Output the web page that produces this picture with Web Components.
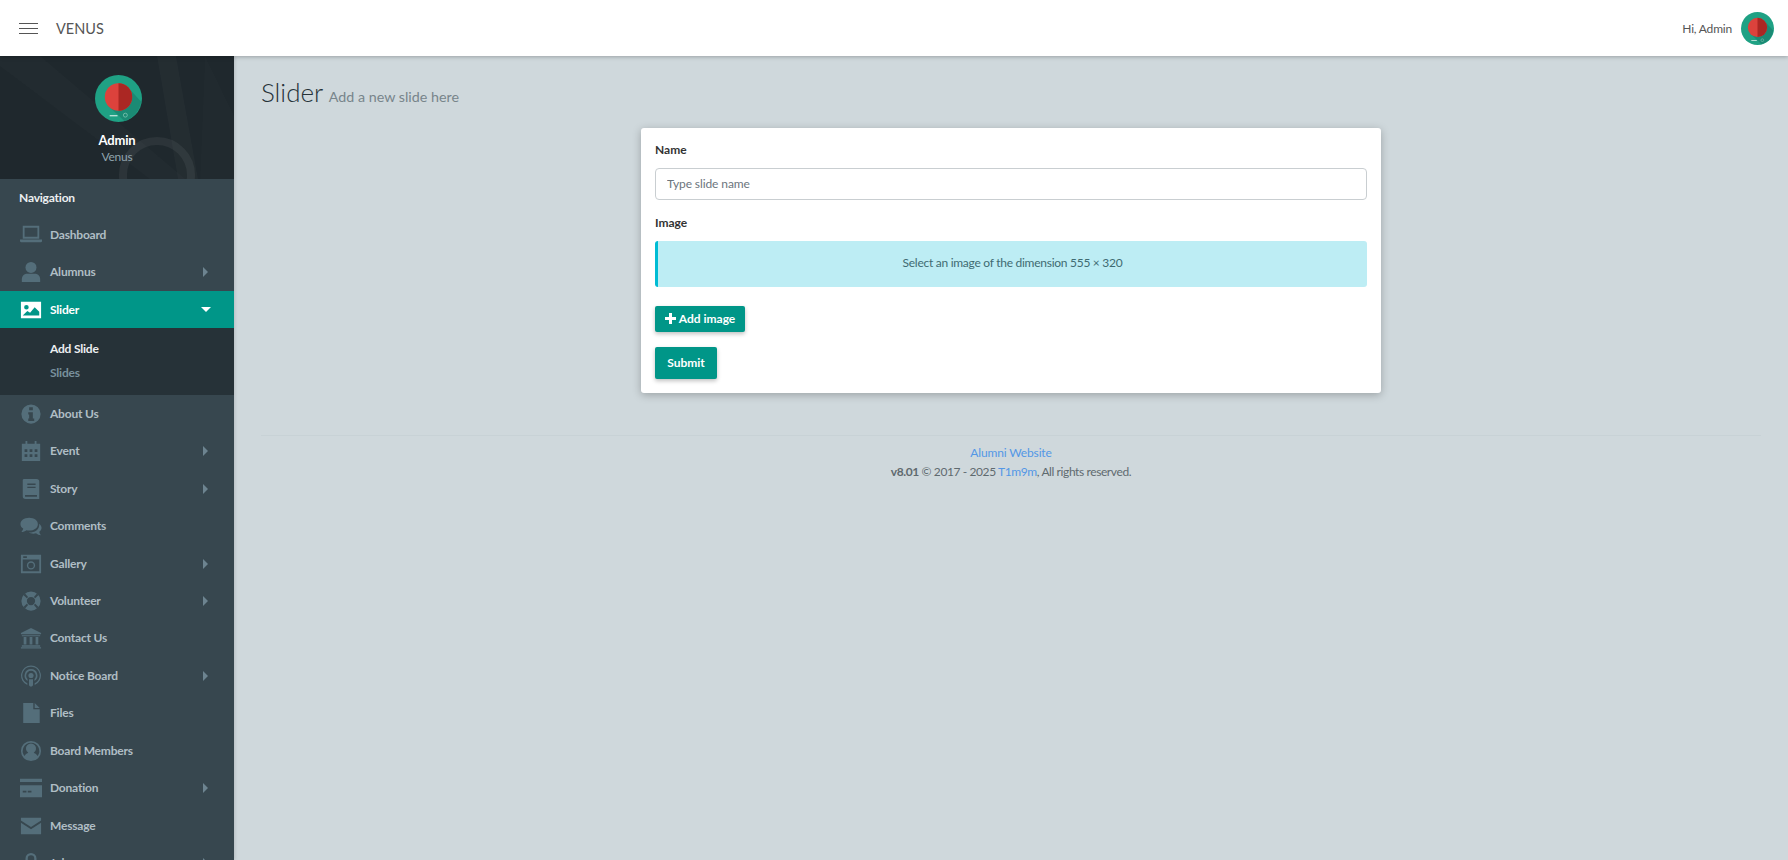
<!DOCTYPE html>
<html lang="en">
<head>
<meta charset="utf-8">
<title>Venus</title>
<style>
    html, body { margin: 0; height: 100%; overflow: hidden; }
    body { font-family: Lato, "Noto Sans", sans-serif; background: #cfd8dc; color: #3b4144; }
</style>
</head>
<body>
<venus-app></venus-app>

<script>
const avatarSvg = size => {
    return `<svg width="${size}" height="${size}" viewBox="0 0 48 48" style="display:block">
        <circle cx="24" cy="24" r="24" fill="#1fa184"/>
        <path d="M33 12 L47 27 A24 24 0 0 1 30 47 L14 32 Z" fill="#1b8a74"/>
        <circle cx="24" cy="22.500" r="14" fill="#dc423c"/>
        <path d="M24 8.500a14 14 0 0 1 0 28z" fill="#ab2723"/>
        <rect x="15" y="41" width="8" height="1.200" fill="#cfeae3"/>
        <circle cx="31" cy="41" r="2" fill="none" stroke="#7fc6b4" stroke-width=".8"/>
    </svg>`;
};

// sidebar icons, all on a 24 wide box
const ICONS = {
    laptop: '<path d="M3 2h18v14H3zM5 4v10h14V4z" fill-rule="evenodd"/><path d="M0 17h24v1.500a1.500 1.500 0 0 1-1.500 1.500h-21A1.500 1.500 0 0 1 0 18.500z"/>',
    user: '<circle cx="12" cy="7" r="6"/><path d="M2 23v-3c0-4 3-6 6-6h8c3 0 6 2 6 6v3z"/>',
    image: '<path fill-rule="evenodd" d="M1 3h22v18H1zM3 18h18v-4l-5-5-5 6-3-2zM7 6.500a2.500 2.500 0 1 0 0 5 2.500 2.500 0 0 0 0-5z"/>',
    info: '<path fill-rule="evenodd" d="M12 1.500a10.500 10.500 0 1 0 0 21 10.500 10.500 0 0 0 0-21zM10 4.500h4v3.500h-4zM9 10h5v7h1.500v2.500h-6.500V17H10v-4.500H9z"/>',
    calendar: '<path fill-rule="evenodd" d="M6 1h2v3h8V1h2v3h4v19H2V4h4zM5 10v3h3v-3zm5.500 0v3h3v-3zm5.500 0v3h3v-3zM5 15.500v3h3v-3zm5.500 0v3h3v-3zm5.500 0v3h3v-3z"/>',
    book: '<path fill-rule="evenodd" d="M4 1h14a3 3 0 0 1 3 3v19H6a3 3 0 0 1-3-3V2zM8 6v1.500h9V6zm0 3.500V11h9V9.500zM5.500 18.500v2h13v-2z"/>',
    comments: '<path d="M10 3c5.500 0 9.500 3 9.500 7s-4 7-9.500 7c-1 0-2-.1-3-.4C5.500 18 3.500 18.500 1.500 18.500c1-1 1.800-2.200 2-3.700C1.500 13.500.5 11.900.5 10c0-4 4-7 9.500-7z"/><path d="M21 9.500c1.500 1.200 2.500 2.800 2.500 4.500 0 1.800-1 3.300-2.500 4.300.2 1.500 1 2.800 2 3.700-2 0-4-.5-5.500-2-1 .3-2 .4-3 .4-2 0-3.500-.4-5-1.200 6 .3 12-3 11.500-9.700z"/>',
    camera: '<path fill-rule="evenodd" d="M1 2h22v20H1zM3 7v13h18V7zM3.500 3.500v2h4v-2zM12 9a4.500 4.500 0 1 0 0 9 4.500 4.500 0 0 0 0-9zm0 1.500a3 3 0 1 1 0 6 3 3 0 0 1 0-6z"/>',
    lifering: '<path fill-rule="evenodd" d="M12 1.500a10.500 10.500 0 1 0 0 21 10.500 10.500 0 0 0 0-21zM12 7.500a4.500 4.500 0 1 1 0 9 4.500 4.500 0 0 1 0-9z"/><path d="M5.500 3.800 8.800 7.600 7.400 9 3.800 5.500zM18.500 3.800 15.200 7.600 16.600 9 20.200 5.500zM5.500 20.200 8.800 16.400 7.400 15 3.800 18.500zM18.500 20.200 15.200 16.400 16.600 15 20.200 18.500z" fill="#37474f"/>',
    bank: '<path d="M12 1l11 5.500V8H1V6.500zM2 9h20v1H2zM4 11h3v8H4zM10.500 11h3v8h-3zM17 11h3v8h-3zM2 20h20v1.500H2zM1 22h22v1.500H1z"/>',
    podcast: '<path fill-rule="evenodd" d="M12 .5a11 11 0 0 0-4 21.200v-1.700a9.500 9.500 0 1 1 8 0v1.700A11 11 0 0 0 12 .5z"/><path fill-rule="evenodd" d="M12 4.500a7 7 0 0 0-3.800 12.900v-2a5.300 5.300 0 1 1 7.600 0v2A7 7 0 0 0 12 4.500z"/><circle cx="12" cy="11.500" r="2.800"/><path d="M9.800 15.500h4.400v6c0 1-1 2-2.200 2s-2.200-1-2.200-2z"/>',
    file: '<path d="M3.500 1h11v7h7v15h-18z"/><path d="M16 1l5.500 5.500H16z"/>',
    usercircle: '<path fill-rule="evenodd" d="M12 1a11 11 0 1 0 0 22 11 11 0 0 0 0-22zm0 2a9 9 0 0 1 7.200 14.400C18 15.500 16 14.500 15 14a5.500 5.500 0 1 0-6 0c-1 .5-3 1.500-4.200 3.400A9 9 0 0 1 12 3z"/>',
    card: '<path fill-rule="evenodd" d="M0 2h24v3.500H0zM0 9h24v13H0zM3 15v2h4v-2zm5.500 0v2h4v-2z"/>',
    envelope: '<path d="M1 3h22v3L12 13 1 6z"/><path d="M1 8.500l11 7 11-7V21H1z"/>',
    lock: '<path fill-rule="evenodd" d="M12 1a6 6 0 0 0-6 6v4h2.500V7a3.500 3.500 0 0 1 7 0v4H18V7a6 6 0 0 0-6-6z"/><path d="M4 11h16v12H4z"/>'
};

class VenusIcon extends HTMLElement {
    connectedCallback() {
        const name = this.getAttribute('name');
        this.attachShadow({ mode: 'open' }).innerHTML = `
            <style>
                :host { display: block; width: 22px; height: 22px; }
                svg { display: block; width: 100%; height: 100%; fill: currentColor; }
            </style>
            <svg viewBox="0 0 24 24">${ICONS[name] || ''}</svg>`;
    }
}
customElements.define('venus-icon', VenusIcon);

class NavItem extends HTMLElement {
    connectedCallback() {
        const active = this.hasAttribute('active');
        const arrow = this.hasAttribute('arrow');
        this.attachShadow({ mode: 'open' }).innerHTML = `
            <style>
                :host { display: flex; align-items: center; height: 37.470px; padding-left: 19.500px; padding-right: 24px; font-size: 12px; letter-spacing: -.2px; font-weight: 700; color: #b0bec5; }
                :host([active]) { background: #009688; color: #fff; }
                venus-icon { color: #546e7a; flex: none; margin-right: 8.500px; }
                :host([active]) venus-icon { color: #fff; }
                .label { flex: 1; padding-bottom: 1px; }
                .tri { width: 0; height: 0; border-style: solid; border-width: 5px 0 5px 5px; border-color: transparent transparent transparent #6d8490; margin-right: 2px; }
                .tri.open { border-width: 5px 5px 0 5px; border-color: #fff transparent transparent transparent; margin-right: -1px; }
            </style>
            <venus-icon name="${this.getAttribute('icon')}"></venus-icon>
            <span class="label"><slot></slot></span>
            ${arrow || active ? `<span class="tri ${active ? 'open' : ''}"></span>` : ''}`;
    }
}
customElements.define('nav-item', NavItem);

class VenusSidebar extends HTMLElement {
    constructor() {
        super();
        this.attachShadow({ mode: 'open' }).innerHTML = `
            <style>
                :host { display: block; width: 234px; height: 100%; overflow: hidden; background: #37474f; flex: none; box-shadow: 1px 0 3px rgba(0,0,0,.12); }
                .profile { position: relative; height: 123px; background: #1f282d; overflow: hidden; display: flex; flex-direction: column; align-items: center; padding-top: 19px; box-sizing: border-box; }
                .profile > svg.bg { position: absolute; inset: 0; }
                .pic { position: relative; margin-bottom: 8px; margin-left: 3px; }
                .name { position: relative; font-size: 13px; letter-spacing: -.2px; font-weight: 700; color: #fff; line-height: 18px; margin-top: 1px; }
                .role { position: relative; font-size: 12px; letter-spacing: -.2px; color: #90a4ae; line-height: 16px; }
                .head { height: 37px; padding-left: 19px; display: flex; align-items: center; font-size: 12px; letter-spacing: -.2px; font-weight: 700; color: #eceff1; }
                .sub { background: #263238; height: 66.500px; padding-left: 50px; font-size: 12px; letter-spacing: -.2px; font-weight: 700; display: flex; flex-direction: column; padding-top: 8.500px; box-sizing: border-box; }
                .sub div { height: 24.500px; line-height: 24.500px; color: #78909c; }
                .sub div.on { color: #eceff1; }
            </style>
            <div class="profile">
                <svg class="bg" width="234" height="123" viewBox="0 0 234 123">
                    <path d="M40 0 L185 123 H150 L0 10 V0z" fill="#fff" opacity=".015"/>
                    <path d="M157 0 L178 123 H198 L176 0z" fill="#fff" opacity=".025"/>
                    <path d="M205 0 L200 123 H234 V60z" fill="#fff" opacity=".012"/>
                    <circle cx="157" cy="119" r="34" fill="none" stroke="#fff" stroke-opacity=".06" stroke-width="8"/>
                </svg>
                <div class="pic">${avatarSvg(47)}</div>
                <div class="name">Admin</div>
                <div class="role">Venus</div>
            </div>
            <div class="head">Navigation</div>
            <nav-item icon="laptop">Dashboard</nav-item>
            <nav-item icon="user" arrow>Alumnus</nav-item>
            <nav-item icon="image" active>Slider</nav-item>
            <div class="sub"><div class="on">Add Slide</div><div>Slides</div></div>
            <nav-item icon="info">About Us</nav-item>
            <nav-item icon="calendar" arrow>Event</nav-item>
            <nav-item icon="book" arrow>Story</nav-item>
            <nav-item icon="comments">Comments</nav-item>
            <nav-item icon="camera" arrow>Gallery</nav-item>
            <nav-item icon="lifering" arrow>Volunteer</nav-item>
            <nav-item icon="bank">Contact Us</nav-item>
            <nav-item icon="podcast" arrow>Notice Board</nav-item>
            <nav-item icon="file">Files</nav-item>
            <nav-item icon="usercircle">Board Members</nav-item>
            <nav-item icon="card" arrow>Donation</nav-item>
            <nav-item icon="envelope">Message</nav-item>
            <nav-item icon="lock" arrow>Jobs</nav-item>`;
    }
}
customElements.define('venus-sidebar', VenusSidebar);

class VenusHeader extends HTMLElement {
    constructor() {
        super();
        this.attachShadow({ mode: 'open' }).innerHTML = `
            <style>
                :host { display: flex; align-items: center; height: 56px; background: #fff; padding: 0 14px 0 19px; box-shadow: 0 1px 4px rgba(0,0,0,.25); position: relative; z-index: 2; flex: none; }
                .burger { width: 19px; height: 9px; border-top: 1px solid #555; border-bottom: 1px solid #555; position: relative; margin-right: 18px; }
                .burger::after { content: ""; position: absolute; left: 0; right: 0; top: 4px; height: 1px; background: #555; }
                .brand { font-size: 14.500px; color: #555; flex: 1; }
                .hi { font-size: 12px; letter-spacing: -.2px; color: #555; margin-right: 9px; }
            </style>
            <div class="burger"></div>
            <div class="brand">VENUS</div>
            <div class="hi">Hi, Admin</div>
            ${avatarSvg(33)}`;
    }
}
customElements.define('venus-header', VenusHeader);

class SlideForm extends HTMLElement {
    constructor() {
        super();
        this.attachShadow({ mode: 'open' }).innerHTML = `
            <style>
                :host { display: block; width: 740px; box-sizing: border-box; background: #fff; border-radius: 3px; padding: 13px 14px 14px; box-shadow: 0 2px 8px rgba(0,0,0,.25); font-size: 12px; }
                label { display: block; font-weight: 700; color: #333; line-height: 17px; margin-bottom: 10px; }
                input { display: block; width: 100%; box-sizing: border-box; height: 32px; border: 1px solid #c9ced1; border-radius: 4px; padding: 0 12px 1px 11px; font: inherit; letter-spacing: -.1px; margin-bottom: 14px; outline: none; }
                input::placeholder { color: #6c757d; }
                .note { height: 46px; box-sizing: border-box; padding-bottom: 3px; background: #bdedf4; border-left: 3px solid #00bcd4; border-radius: 3px; display: flex; align-items: center; justify-content: center; color: #3f6b72; letter-spacing: -.27px; margin-bottom: 18.500px; }
                button { display: flex; align-items: center; justify-content: center; background: #009688; color: #fff; border: 0; border-radius: 2px; font: inherit; font-weight: 700; box-shadow: 0 2px 4px rgba(0,0,0,.25); padding: 0 0 1px; }
                .add { width: 90px; height: 26px; margin-bottom: 15px; gap: 3px; }
                .add svg { width: 11px; height: 11px; fill: #fff; }
                .sub { width: 62px; height: 32px; }
            </style>
            <label>Name</label>
            <input type="text" placeholder="Type slide name">
            <label>Image</label>
            <div class="note">Select an image of the dimension 555 × 320</div>
            <button class="add"><svg viewBox="0 0 11 11"><path d="M4 0h3v4h4v3H7v4H4V7H0V4h4z"/></svg>Add image</button>
            <button class="sub">Submit</button>`;
    }
}
customElements.define('slide-form', SlideForm);

class VenusFooter extends HTMLElement {
    constructor() {
        super();
        this.attachShadow({ mode: 'open' }).innerHTML = `
            <style>
                :host { display: block; border-top: 1px solid #c8d2d6; margin-top: 42px; padding-top: 8.500px; text-align: center; font-size: 12px; line-height: 18.500px; color: #5f6a6f; }
                a { color: #5397e6; text-decoration: none; }
                .site { letter-spacing: -.15px; }
                .copy { letter-spacing: -.4px; }
            </style>
            <div class="site"><a>Alumni Website</a></div>
            <div class="copy"><b>v8.01</b> © 2017 - 2025 <a>T1m9m</a>, All rights reserved.</div>`;
    }
}
customElements.define('venus-footer', VenusFooter);

class VenusApp extends HTMLElement {
    constructor() {
        super();
        this.attachShadow({ mode: 'open' }).innerHTML = `
            <style>
                :host { display: flex; flex-direction: column; height: 860px; }
                .row { display: flex; flex: 1; min-height: 0; }
                main { flex: 1; padding: 0 27px; }
                h1 { margin: 0; font-weight: 300; font-size: 26px; line-height: 30px; padding: 21px 0 16px; color: #263238; }
                h1 small { font-size: 14.300px; font-weight: 400; color: #78858b; margin-left: -1px; }
                .center { display: flex; justify-content: center; }
            </style>
            <venus-header></venus-header>
            <div class="row">
                <venus-sidebar></venus-sidebar>
                <main>
                    <h1>Slider <small>Add a new slide here</small></h1>
                    <div class="center"><slide-form></slide-form></div>
                    <venus-footer></venus-footer>
                </main>
            </div>`;
    }
}
customElements.define('venus-app', VenusApp);
</script>
</body>
</html>
